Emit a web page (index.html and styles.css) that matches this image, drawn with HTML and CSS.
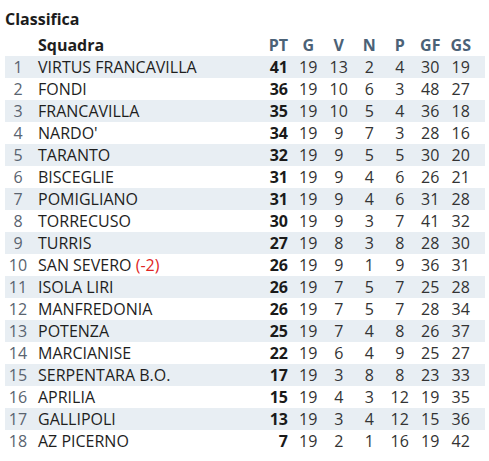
FILE: index.html
```html
<!DOCTYPE html>
<html lang="it">
<head>
<meta charset="utf-8">
<title>Classifica</title>
<link rel="stylesheet" href="styles.css">
</head>
<body>
<div class="wrap">
<h2 class="title">Classifica</h2>
<table class="standings">
<thead>
<tr><th class="rank"></th><th class="team">Squadra</th><th class="pt">PT</th><th class="num">G</th><th class="num">V</th><th class="num">N</th><th class="num">P</th><th class="num">GF</th><th class="num gs">GS</th></tr>
</thead>
<tbody>
<tr><td class="rank">1</td><td class="team">VIRTUS FRANCAVILLA</td><td class="pt">41</td><td>19</td><td>13</td><td>2</td><td>4</td><td>30</td><td class="gs">19</td></tr>
<tr><td class="rank">2</td><td class="team">FONDI</td><td class="pt">36</td><td>19</td><td>10</td><td>6</td><td>3</td><td>48</td><td class="gs">27</td></tr>
<tr><td class="rank">3</td><td class="team">FRANCAVILLA</td><td class="pt">35</td><td>19</td><td>10</td><td>5</td><td>4</td><td>36</td><td class="gs">18</td></tr>
<tr><td class="rank">4</td><td class="team">NARDO'</td><td class="pt">34</td><td>19</td><td>9</td><td>7</td><td>3</td><td>28</td><td class="gs">16</td></tr>
<tr><td class="rank">5</td><td class="team">TARANTO</td><td class="pt">32</td><td>19</td><td>9</td><td>5</td><td>5</td><td>30</td><td class="gs">20</td></tr>
<tr><td class="rank">6</td><td class="team">BISCEGLIE</td><td class="pt">31</td><td>19</td><td>9</td><td>4</td><td>6</td><td>26</td><td class="gs">21</td></tr>
<tr><td class="rank">7</td><td class="team">POMIGLIANO</td><td class="pt">31</td><td>19</td><td>9</td><td>4</td><td>6</td><td>31</td><td class="gs">28</td></tr>
<tr><td class="rank">8</td><td class="team">TORRECUSO</td><td class="pt">30</td><td>19</td><td>9</td><td>3</td><td>7</td><td>41</td><td class="gs">32</td></tr>
<tr><td class="rank">9</td><td class="team">TURRIS</td><td class="pt">27</td><td>19</td><td>8</td><td>3</td><td>8</td><td>28</td><td class="gs">30</td></tr>
<tr><td class="rank">10</td><td class="team">SAN SEVERO <span class="penalty">(-2)</span></td><td class="pt">26</td><td>19</td><td>9</td><td>1</td><td>9</td><td>36</td><td class="gs">31</td></tr>
<tr><td class="rank">11</td><td class="team">ISOLA LIRI</td><td class="pt">26</td><td>19</td><td>7</td><td>5</td><td>7</td><td>25</td><td class="gs">28</td></tr>
<tr><td class="rank">12</td><td class="team">MANFREDONIA</td><td class="pt">26</td><td>19</td><td>7</td><td>5</td><td>7</td><td>28</td><td class="gs">34</td></tr>
<tr><td class="rank">13</td><td class="team">POTENZA</td><td class="pt">25</td><td>19</td><td>7</td><td>4</td><td>8</td><td>26</td><td class="gs">37</td></tr>
<tr><td class="rank">14</td><td class="team">MARCIANISE</td><td class="pt">22</td><td>19</td><td>6</td><td>4</td><td>9</td><td>25</td><td class="gs">27</td></tr>
<tr><td class="rank">15</td><td class="team">SERPENTARA B.O.</td><td class="pt">17</td><td>19</td><td>3</td><td>8</td><td>8</td><td>23</td><td class="gs">33</td></tr>
<tr><td class="rank">16</td><td class="team">APRILIA</td><td class="pt">15</td><td>19</td><td>4</td><td>3</td><td>12</td><td>19</td><td class="gs">35</td></tr>
<tr><td class="rank">17</td><td class="team">GALLIPOLI</td><td class="pt">13</td><td>19</td><td>3</td><td>4</td><td>12</td><td>15</td><td class="gs">36</td></tr>
<tr><td class="rank">18</td><td class="team">AZ PICERNO</td><td class="pt">7</td><td>19</td><td>2</td><td>1</td><td>16</td><td>19</td><td class="gs">42</td></tr>
</tbody>
</table>
</div>
</body>
</html>
```

FILE: styles.css
```css
html, body {
  margin: 0;
  padding: 0;
  background: #ffffff;
}
body {
  font-family: "Open Sans", "Liberation Sans", sans-serif;
  color: #222222;
}
.wrap {
  padding: 8px 4px 0 5px;
}
.title {
  margin: 0 0 4px 0;
  font-size: 16px;
  font-weight: 700;
  line-height: 22px;
  color: #1c1c1c;
}
.standings {
  border-collapse: collapse;
  width: 480px;
  table-layout: fixed;
  font-size: 16px;
}
.standings th,
.standings td {
  box-sizing: border-box;
  padding: 0;
  height: 22px;
  line-height: 22px;
  text-align: center;
  white-space: nowrap;
  width: 30.5px;
}
.standings th {
  color: #4b6277;
  font-weight: 700;
}
.standings td {
  color: #333333;
}
.standings tbody tr:nth-child(odd) td {
  background: #e8eef3;
}
.standings .rank {
  width: 26px;
  color: #5a6470;
}
.standings .team {
  text-align: left;
  padding-left: 7px;
  width: 222px;
  color: #1e1e1e;
}
.standings .pt {
  width: 40px;
  text-align: right;
  padding-right: 5px;
}
.standings td.pt {
  font-weight: 700;
  color: #1a1a1a;
}
.standings .gs {
  width: 39.5px;
  padding-right: 9px;
}
.penalty {
  color: #e02424;
}
```
